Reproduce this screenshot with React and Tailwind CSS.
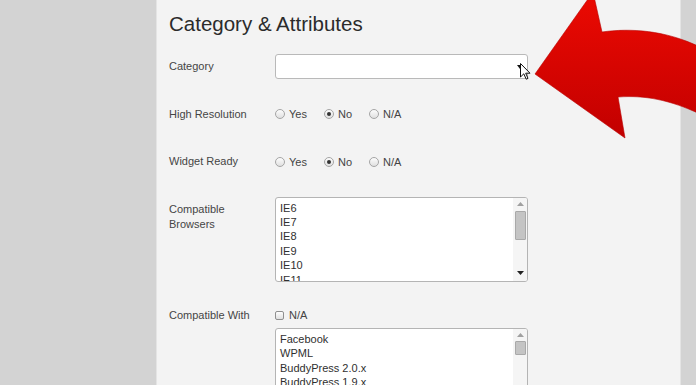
import React from "react";

const browsers = ["IE6", "IE7", "IE8", "IE9", "IE10", "IE11", "Firefox", "Chrome", "Safari"];
const plugins = ["Facebook", "WPML", "BuddyPress 2.0.x", "BuddyPress 1.9.x", "BuddyPress 1.8.x", "bbPress 2.5.x"];

const Radio = ({ checked }) => (
  <span className="flex h-[10px] w-[10px] items-center justify-center rounded-full border border-[#a5a5a5] bg-linear-to-b from-[#fdfdfd] to-[#e0e0e0]">
    {checked && <span className="h-[4px] w-[4px] rounded-full bg-[#333]" />}
  </span>
);

const RadioGroup = ({ value }) => (
  <div className="flex items-center gap-[17px] text-[11px] text-[#444]">
    {["Yes", "No", "N/A"].map((opt) => (
      <label key={opt} className="flex items-center gap-[4px]">
        <Radio checked={opt === value} />
        <span className="pt-[1px]">{opt}</span>
      </label>
    ))}
  </div>
);

const Track = ({ upH, thumbH }) => (
  <div className="flex h-full w-[14px] flex-col items-center bg-[#f5f5f5]">
    <div style={{ height: upH }} className="flex items-center justify-center">
      <svg width="7" height="4" viewBox="0 0 7 4">
        <path d="M0 4 L3.5 0 L7 4 Z" fill="#a0a0a0" />
      </svg>
    </div>
    <div
      style={{ height: thumbH }}
      className="w-[11px] rounded-[1px] border border-[#a9a9a9] bg-[#c4c4c4]"
    />
    <div className="flex-1" />
    <div className="flex h-[16px] items-center justify-center">
      <svg width="7" height="4" viewBox="0 0 7 4">
        <path d="M0 0 L7 0 L3.5 4 Z" fill="#222" />
      </svg>
    </div>
  </div>
);

const ListBox = ({ items, height, upH, thumbH }) => (
  <div
    style={{ height }}
    className="flex w-[253px] overflow-hidden rounded-[3px] border border-[#b4b4b4] bg-white"
  >
    <ul className="flex-1 overflow-hidden pl-[4px] pt-[3px] text-[11px] leading-[14.4px] text-[#2f2f2f]">
      {items.map((it) => (
        <li key={it}>{it}</li>
      ))}
    </ul>
    <Track upH={upH} thumbH={thumbH} />
  </div>
);

export default function App() {
  return (
    <div className="relative h-[385px] w-[696px] overflow-hidden bg-[#d3d3d3] font-['Liberation_Sans',Arial,sans-serif]">
      <div className="ml-[156px] h-full w-[525px] border-x border-[#e4e4e4] bg-[#f3f3f3] pl-[12px] pt-[12px]">
        <h2 className="text-[20.5px] leading-[24px] text-[#2b2b2b]">Category &amp; Attributes</h2>

        <div className="mt-[18px] flex h-[25px] items-center">
          <span className="w-[106px] text-[11px] text-[#454545]">Category</span>
          <div className="flex h-[25px] w-[253px] items-center justify-end rounded-[3px] border border-[#b9b9b9] bg-white pr-[4px]">
            <svg width="6" height="4" viewBox="0 0 6 4">
              <path d="M0 0 L6 0 L3 4 Z" fill="#111" />
            </svg>
          </div>
        </div>

        <div className="mt-[22.5px] flex h-[25px] items-center">
          <span className="w-[106px] text-[11px] text-[#454545]">High Resolution</span>
          <RadioGroup value="No" />
        </div>

        <div className="mt-[22.5px] flex h-[25px] items-center">
          <span className="w-[106px] text-[11px] text-[#454545]">Widget Ready</span>
          <RadioGroup value="No" />
        </div>

        <div className="mt-[22.5px] flex items-start">
          <span className="w-[106px] pt-[5px] text-[11px] leading-[15px] text-[#454545]">
            Compatible
            <br />
            Browsers
          </span>
          <ListBox items={browsers} height={85} upH={13} thumbH={29} />
        </div>

        <div className="mt-[26.5px] flex items-start">
          <span className="w-[106px] text-[11px] leading-[15px] text-[#454545]">Compatible With</span>
          <div className="flex flex-col">
            <label className="flex h-[15px] items-center gap-[5px] text-[11px] text-[#444]">
              <span className="h-[9px] w-[9px] rounded-[2px] border border-[#8f8f8f] bg-linear-to-b from-[#fdfdfd] to-[#e0e0e0]" />
              <span>N/A</span>
            </label>
            <div className="mt-[5px]">
              <ListBox items={plugins} height={90} upH={12} thumbH={14} />
            </div>
          </div>
        </div>
      </div>

      {/* mouse pointer over the select */}
      <svg className="pointer-events-none absolute left-[520px] top-[63px]" width="12" height="18" viewBox="0 0 12 18">
        <path d="M0.5 0.5 L0.5 14 L3.8 10.8 L6.2 16.2 L8 15.4 L5.7 10.2 L10 10.2 Z" fill="#fff" stroke="#111" strokeWidth="1" strokeLinejoin="round" />
      </svg>

      {/* big red arrow */}
      <svg className="pointer-events-none absolute left-0 top-0" width="696" height="385" viewBox="0 0 696 385">
        <defs>
          <linearGradient id="red" x1="0" y1="0" x2="0" y2="1">
            <stop offset="0" stopColor="#ec0a02" />
            <stop offset="1" stopColor="#c20000" />
          </linearGradient>
        </defs>
        <path
          d="M535 74 L593 -8 L602 32 C630 28 665 30 700 47 L700 114 C670 100 645 95 618 97 L625 138 Z"
          fill="url(#red)"
          stroke="#b80000"
          strokeWidth="0.6"
        />
      </svg>
    </div>
  );
}
